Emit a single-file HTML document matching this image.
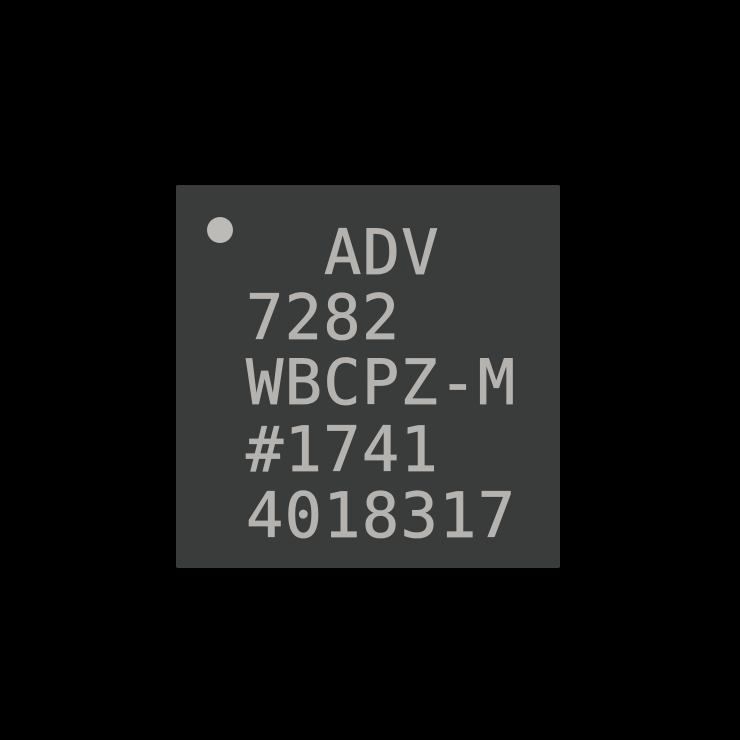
<!DOCTYPE html>
<html><head><style>
html,body{margin:0;padding:0;background:#000;width:740px;height:740px;overflow:hidden}
.chip{position:absolute;left:176px;top:185px;width:384px;height:383px;background:#3a3b3b;border-radius:2px}
.dot{position:absolute;left:207px;top:217px;width:26px;height:26px;border-radius:50%;background:#bdbbb8}
.t{position:absolute;font-family:"DejaVu Sans Mono","Liberation Mono",monospace;font-size:62px;letter-spacing:1.3px;color:#b5b3b0;-webkit-text-stroke:0.8px #b5b3b0;line-height:1;white-space:pre}
</style></head><body>
<div class="chip"></div>
<div class="dot"></div>
<div class="t" style="left:324px;top:222px">ADV</div>
<div class="t" style="left:246px;top:287px">7282</div>
<div class="t" style="left:246px;top:352px">WBCPZ-M</div>
<div class="t" style="left:246px;top:419px">#1741</div>
<div class="t" style="left:246px;top:485px">4018317</div>
</body></html>
